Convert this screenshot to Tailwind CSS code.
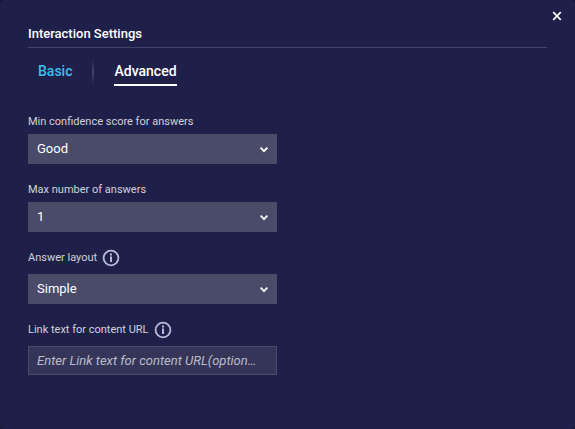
<!DOCTYPE html>
<html lang="en">
<head>
<meta charset="utf-8">
<meta name="viewport" content="width=device-width, initial-scale=1">
<title>Interaction Settings</title>
<script src="https://cdn.jsdelivr.net/npm/@tailwindcss/browser@4"></script>
</head>
<body class="bg-[#13142f] font-['Roboto',sans-serif] text-white">
<main class="relative min-h-screen rounded-sm bg-[#1f2049] px-7 pt-6 pb-7">
  <button type="button" aria-label="Close" class="absolute top-1.5 right-2 flex size-5 items-center justify-center">
    <svg class="size-2.5" viewBox="0 0 10 10" fill="none" stroke="#fff" stroke-width="1.7"><path d="M1.2 1.2 8.8 8.8M8.8 1.2 1.2 8.8"/></svg>
  </button>
  <h1 class="border-b border-[#44456a] pb-1 text-[13px] leading-[19px] font-medium">Interaction Settings</h1>
  <nav class="flex items-start pt-3 pl-2.5 text-sm leading-[22px] font-medium">
    <a href="#basic" class="text-[#3fbdec]">Basic</a>
    <span class="mx-5 h-6 w-0.5 bg-linear-to-b from-transparent via-[#43446b] to-transparent"></span>
    <a href="#advanced" aria-current="page" class="border-b-2 border-white pb-0.5">Advanced</a>
  </nav>
  <form class="flex w-[249px] flex-col gap-4 pt-[26px] text-[11px] leading-5 text-[#d2d2dc]">
    <div class="flex flex-col gap-0.5">
      <label for="score">Min confidence score for answers</label>
      <div class="relative">
        <select id="score" class="block h-[30px] w-full appearance-none bg-[#4a4b69] px-[9px] text-[13px] text-white"><option>Good</option></select>
        <svg class="pointer-events-none absolute top-3 right-2 h-2 w-2.5" viewBox="0 0 10 8" fill="none" stroke="#fff" stroke-width="1.9"><path d="M1.6 1.6 5 5.2 8.4 1.6"/></svg>
      </div>
    </div>
    <div class="flex flex-col gap-0.5">
      <label for="count">Max number of answers</label>
      <div class="relative">
        <select id="count" class="block h-[30px] w-full appearance-none bg-[#4a4b69] px-[9px] text-[13px] text-white"><option>1</option></select>
        <svg class="pointer-events-none absolute top-3 right-2 h-2 w-2.5" viewBox="0 0 10 8" fill="none" stroke="#fff" stroke-width="1.9"><path d="M1.6 1.6 5 5.2 8.4 1.6"/></svg>
      </div>
    </div>
    <div class="flex flex-col gap-1">
      <div class="flex h-[22px] items-start gap-1">
        <label for="layout">Answer layout</label>
        <svg class="size-5" viewBox="0 0 20 20" fill="none" stroke="#b9bbdc" role="img" aria-label="Information"><circle cx="10" cy="10" r="7.4" stroke-width="1.8"/><path d="M10 8.6V14M10 5.6V7.4" stroke-width="2"/></svg>
      </div>
      <div class="relative">
        <select id="layout" class="block h-[30px] w-full appearance-none bg-[#4a4b69] px-[9px] text-[13px] text-white"><option>Simple</option></select>
        <svg class="pointer-events-none absolute top-3 right-2 h-2 w-2.5" viewBox="0 0 10 8" fill="none" stroke="#fff" stroke-width="1.9"><path d="M1.6 1.6 5 5.2 8.4 1.6"/></svg>
      </div>
    </div>
    <div class="flex flex-col gap-1">
      <div class="flex h-[22px] items-start gap-1">
        <label for="link">Link text for content URL</label>
        <svg class="size-5" viewBox="0 0 20 20" fill="none" stroke="#b9bbdc" role="img" aria-label="Information"><circle cx="10" cy="10" r="7.4" stroke-width="1.8"/><path d="M10 8.6V14M10 5.6V7.4" stroke-width="2"/></svg>
      </div>
      <input id="link" type="text" placeholder="Enter Link text for content URL(option…" class="block h-[29px] w-full border border-[#4a4b69] bg-[#343558] px-2 text-[13px] text-white italic placeholder:text-[#bcbcc8]">
    </div>
  </form>
</main>
</body>
</html>
